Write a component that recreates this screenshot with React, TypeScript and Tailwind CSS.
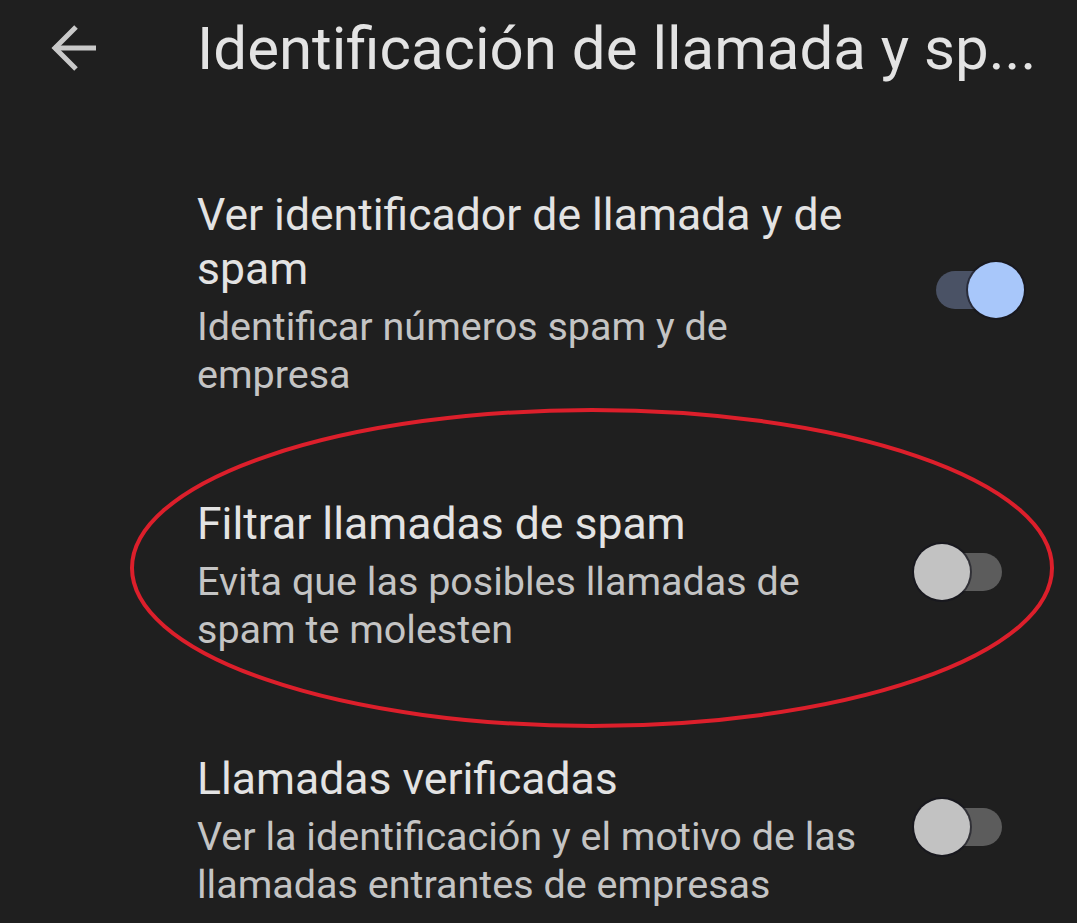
import React, { useState } from 'react';

type Setting = {
  id: string;
  title: string;
  subtitle: string;
  on: boolean;
};

const SETTINGS: Setting[] = [
  {
    id: 'caller-id',
    title: 'Ver identificador de llamada y de spam',
    subtitle: 'Identificar números spam y de empresa',
    on: true,
  },
  {
    id: 'filter',
    title: 'Filtrar llamadas de spam',
    subtitle: 'Evita que las posibles llamadas de spam te molesten',
    on: false,
  },
  {
    id: 'verified',
    title: 'Llamadas verificadas',
    subtitle: 'Ver la identificación y el motivo de las llamadas entrantes de empresas',
    on: false,
  },
];

const Toggle: React.FC<{ on: boolean; onClick: () => void }> = ({ on, onClick }) => (
  <button
    onClick={onClick}
    className={`relative w-[66px] h-[38px] rounded-full shrink-0 ${on ? 'bg-[#4a5265]' : 'bg-[#5c5c5c]'}`}
  >
    <span
      className={`absolute top-[-9px] w-[56px] h-[56px] rounded-full shadow-[0_0_0_2px_rgba(20,20,30,0.6)] ${
        on ? 'left-[32px] bg-[#a8c7fa]' : 'left-[-22px] bg-[#c2c2c2]'
      }`}
    />
  </button>
);

const App: React.FC = () => {
  const [values, setValues] = useState<Record<string, boolean>>(
    Object.fromEntries(SETTINGS.map(s => [s.id, s.on]))
  );

  return (
    <div
      className="relative min-h-[923px] w-full bg-[#1f1f1f] overflow-hidden"
      style={{ fontFamily: 'Roboto, "Noto Sans", sans-serif' }}
    >
      <header className="flex items-center h-[98px]">
        <div className="w-[197px] flex items-center pl-[50px]">
          <svg width="50" height="50" viewBox="0 0 50 50" fill="none" stroke="#c9c9c9" strokeWidth="5">
            <path d="M4 24 H46" />
            <path d="M26 3 L5 24 L26 45" strokeLinejoin="miter" />
          </svg>
        </div>
        <h1 className="flex-1 whitespace-nowrap text-[60px] leading-none text-[#e3e3e3] font-normal">
          Identificación de llamada y sp...
        </h1>
      </header>

      <div className="pt-[41px]">
        {SETTINGS.map(s => (
          <div key={s.id} className="flex items-center pl-[197px] pr-[75px] py-[49px]">
            <div className="w-[683px]">
              <div className="text-[44.5px] leading-[54px] text-[#e3e3e3]">{s.title}</div>
              <div className="mt-[7px] text-[39.5px] leading-[48px] text-[#c4c4c4]">{s.subtitle}</div>
            </div>
            <div className="ml-auto">
              <Toggle
                on={values[s.id]}
                onClick={() => setValues(v => ({ ...v, [s.id]: !v[s.id] }))}
              />
            </div>
          </div>
        ))}
      </div>

      <svg className="absolute inset-0 pointer-events-none" width="1077" height="923">
        <ellipse cx="592" cy="568" rx="460" ry="158" fill="none" stroke="#dc1f2b" strokeWidth="4" />
      </svg>
    </div>
  );
};

export default App;
